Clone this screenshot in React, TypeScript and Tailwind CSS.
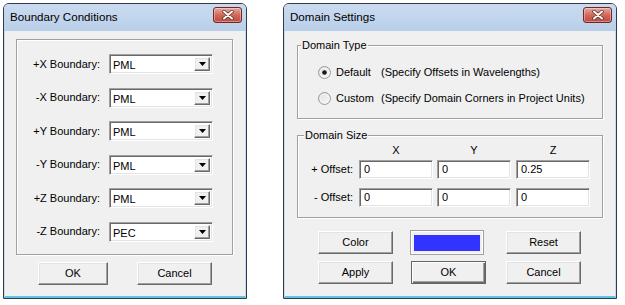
import React from 'react';

const raised =
  'bg-[#f0f0f0] border border-t-white border-l-white border-r-[#696969] border-b-[#696969] shadow-[inset_-1px_-1px_0_#a0a0a0,inset_1px_1px_0_#e3e3e3]';
const sunken =
  'bg-white border border-t-[#a0a0a0] border-l-[#a0a0a0] border-r-white border-b-white shadow-[inset_1px_1px_0_#696969,inset_-1px_-1px_0_#e3e3e3]';
const etched = 'border border-[#a0a0a0] shadow-[inset_1px_1px_0_#fff,1px_1px_0_#fff]';

function CloseButton() {
  return (
    <div className="mt-[3px] w-[29px] h-[16px] rounded-[3px] border border-[#6e2a22] bg-gradient-to-b from-[#e8aaa0] via-[#d0685c] to-[#c2483c] shadow-[inset_0_0_0_1px_rgba(255,255,255,0.35)] flex items-center justify-center">
      <svg width="12" height="10" viewBox="0 0 12 10">
        <path d="M2 1.5 L10 8.5 M10 1.5 L2 8.5" stroke="#5a2a25" strokeWidth="3.4" strokeLinecap="round" />
        <path d="M2 1.5 L10 8.5 M10 1.5 L2 8.5" stroke="#fff" strokeWidth="2" strokeLinecap="round" />
      </svg>
    </div>
  );
}

function Window({ title, className, children }: { title: string; className: string; children: React.ReactNode }) {
  return (
    <div className={`flex flex-col h-[296px] rounded-t-[6px] border border-[#2f3b4a] overflow-hidden bg-[#f0f0f0] ${className}`}>
      <div className="h-[27px] shrink-0 flex items-start justify-between pl-[6px] pr-[4px] bg-gradient-to-b from-[#cadbf0] to-[#b9cfe9]">
        <span className="mt-[5px] text-[11.6px] leading-[15px]">{title}</span>
        <CloseButton />
      </div>
      <div className="flex-1 flex flex-col border-x border-x-[#c9d9ee] border-b-2 border-b-[#62c3e3]">{children}</div>
    </div>
  );
}

function Combo({ value }: { value: string }) {
  return (
    <div className={`w-[104px] h-[20px] flex items-stretch p-[2px] ${sunken}`}>
      <span className="flex-1 pl-[1px] leading-[16px]">{value}</span>
      <div className={`w-[16px] flex items-center justify-center ${raised}`}>
        <svg width="7" height="4" viewBox="0 0 7 4">
          <path d="M0 0 H7 L3.5 4 Z" fill="#000" />
        </svg>
      </div>
    </div>
  );
}

function Button({ label, isDefault = false, w = 'w-[75px]', h = 'h-[23px]' }: { label: string; isDefault?: boolean; w?: string; h?: string }) {
  if (isDefault) {
    return (
      <div className={`${w} ${h} border border-[#646464] bg-[#f0f0f0] shadow-[inset_1px_1px_0_#fff,inset_-1px_-1px_0_#696969,inset_-2px_-2px_0_#a0a0a0] flex items-center justify-center`}>
        {label}
      </div>
    );
  }
  return <div className={`${w} ${h} ${raised} flex items-center justify-center`}>{label}</div>;
}

function Radio({ checked }: { checked?: boolean }) {
  return (
    <svg width="13" height="13" viewBox="0 0 13 13">
      <defs>
        <linearGradient id="rg" x1="0" y1="0" x2="1" y2="1">
          <stop offset="0" stopColor="#dcdcdc" />
          <stop offset="1" stopColor="#fbfbfb" />
        </linearGradient>
      </defs>
      <circle cx="6.5" cy="6.5" r="6" fill="url(#rg)" stroke="#9a9a9a" />
      <circle cx="6.5" cy="6.5" r="4.2" fill="none" stroke="#f4f4f4" />
      {checked && <circle cx="6.5" cy="6.5" r="2.3" fill="#1a1a1a" />}
    </svg>
  );
}

const boundaries = [
  ['+X Boundary:', 'PML'],
  ['-X Boundary:', 'PML'],
  ['+Y Boundary:', 'PML'],
  ['-Y Boundary:', 'PML'],
  ['+Z Boundary:', 'PML'],
  ['-Z Boundary:', 'PEC'],
];

export default function App() {
  return (
    <div className="w-[625px] h-[305px] bg-white flex items-start pt-[3px] pl-[3px] gap-[36px] text-[11px] leading-[13px] text-black font-['Liberation_Sans',Arial,sans-serif]">
      <Window title="Boundary Conditions" className="w-[244px]">
        <div className={`mt-[8px] ml-[11px] w-[217px] h-[216px] ${etched} flex flex-col pt-[14px] gap-[13.6px]`}>
          {boundaries.map(([label, value]) => (
            <div key={label} className="flex items-center h-[20px]">
              <span className="w-[83px] text-right">{label}</span>
              <div className="ml-[9px]">
                <Combo value={value} />
              </div>
            </div>
          ))}
        </div>
        <div className="flex mt-[7px] ml-[33px] gap-[29px]">
          <Button label="OK" w="w-[70px]" />
          <Button label="Cancel" w="w-[75px]" />
        </div>
      </Window>

      <Window title="Domain Settings" className="w-[334px]">
        <fieldset className={`mt-[8px] ml-[12px] w-[306px] h-[80px] ${etched}`}>
          <legend className="ml-[3px] px-[1px] bg-[#f0f0f0] leading-[13px]">Domain Type</legend>
          <div className="flex flex-col pl-[20px] pt-[14px] gap-[13px]">
            <div className="flex items-center h-[13px]">
              <Radio checked />
              <span className="ml-[5px] w-[45px]">Default</span>
              <span>(Specify Offsets in Wavelengths)</span>
            </div>
            <div className="flex items-center h-[13px]">
              <Radio />
              <span className="ml-[5px] w-[45px]">Custom</span>
              <span>(Specify Domain Corners in Project Units)</span>
            </div>
          </div>
        </fieldset>

        <fieldset className={`mt-[10px] ml-[12px] w-[306px] h-[89px] ${etched}`}>
          <legend className="ml-[6px] px-[1px] bg-[#f0f0f0] leading-[13px]">Domain Size</legend>
          <div className="flex flex-col pt-[2px]">
            <div className="flex h-[13px] pl-[61px]">
              <span className="w-[74px] text-center">X</span>
              <span className="ml-[4px] w-[74px] text-center">Y</span>
              <span className="ml-[5px] w-[74px] text-center">Z</span>
            </div>
            {[
              ['+ Offset:', '0', '0', '0.25'],
              ['- Offset:', '0', '0', '0'],
            ].map(([label, x, y, z], i) => (
              <div key={label} className={`flex items-center ${i === 0 ? 'mt-[3px]' : 'mt-[9px]'}`}>
                <span className="w-[55px] text-right">{label}</span>
                <div className={`ml-[6px] w-[74px] h-[19px] pl-[4px] flex items-center ${sunken}`}>{x}</div>
                <div className={`ml-[4px] w-[74px] h-[19px] pl-[4px] flex items-center ${sunken}`}>{y}</div>
                <div className={`ml-[5px] w-[74px] h-[19px] pl-[4px] flex items-center ${sunken}`}>{z}</div>
              </div>
            ))}
          </div>
        </fieldset>

        <div className="flex items-center mt-[12px] ml-[33px]">
          <Button label="Color" />
          <div className="ml-[17px] w-[74px] h-[25px] border border-[#a0a0a0] shadow-[inset_1px_1px_0_#fff,inset_-1px_-1px_0_#fff] flex items-center justify-center">
            <div className="w-[66px] h-[16px] bg-[#3333ff]" />
          </div>
          <div className="ml-[22px]">
            <Button label="Reset" />
          </div>
        </div>
        <div className="flex items-center mt-[6px] ml-[33px]">
          <Button label="Apply" />
          <div className="ml-[18px]">
            <Button label="OK" isDefault />
          </div>
          <div className="ml-[20px]">
            <Button label="Cancel" />
          </div>
        </div>
      </Window>
    </div>
  );
}
